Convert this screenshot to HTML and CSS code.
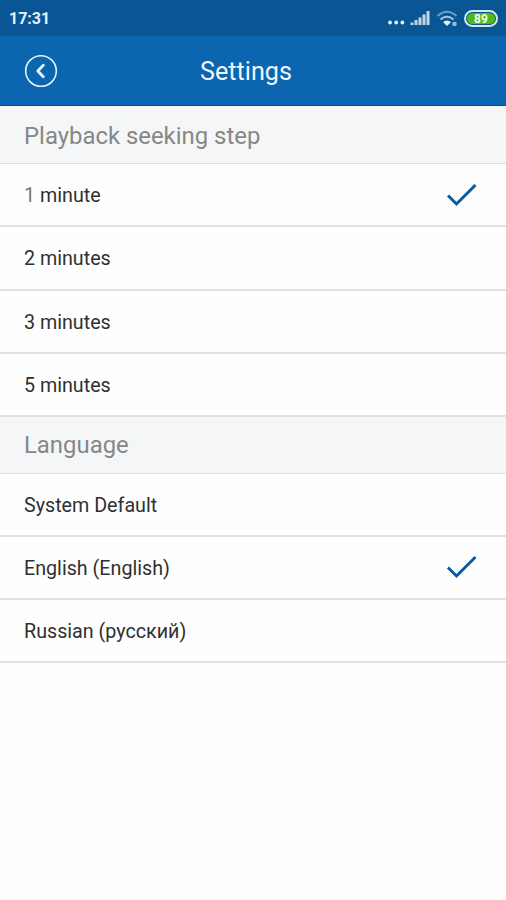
FILE: index.html
```html
<!DOCTYPE html>
<html lang="en">
<head>
<meta charset="utf-8">
<title>Settings</title>
<link rel="stylesheet" href="styles.css">
</head>
<body>
<div class="status">
  <span class="time">17:31</span>
  <svg class="status-icons" width="82" height="20" viewBox="0 0 82 20">
    <g fill="#e3f1f8"><circle cx="5" cy="14.500" r="1.900"/><circle cx="11.200" cy="14.500" r="1.900"/><circle cx="17.400" cy="14.500" r="1.900"/></g>
    <path d="M27 17v-2.500M31 17v-5M35 17V9.500M39 17V6.500M43 17V3" stroke="#bed7e8" stroke-width="3"/>
    <g fill="none" stroke-width="1.900"><path d="M52.500 8q9.500-8.500 19 0" stroke="#6d9fc7"/><path d="M55.500 11.500q6.500-5.500 13 0" stroke="#a9c9df"/></g>
    <path d="M58 14q4-3 8 0l-4 4z" fill="#e3f1f8"/><circle cx="69.500" cy="16" r="2.300" fill="#8fbce0"/>
  </svg>
  <span class="battery"><span class="level">89</span></span>
</div>
<header class="bar">
  <svg class="wave" viewBox="0 0 506 70" width="506" height="70">
    <path d="M0 37h8l3-4 4 8 4-4h2M62 37l4-8 5 16 4-8h8l4-7 5 12 4-5h10l4-9 5 16 4-7h14l5-7 4 11 4-4h15l5-7 4 10 4-3h10M306 37l5-5 5 9 4-4h15l4-6 5 11 4-5h11l4-12 5 20 4-8h10l5-11 4 19 4-8h15l5-12 4 18 5-6h11l4-10 5 17 4-7h15l4-9 5 14 4-5h16"/>
  </svg>
  <svg class="back" width="34" height="34" viewBox="0 0 34 34"><circle cx="17" cy="17" r="15.300" stroke-width="1.600"/><path d="M19.300 11.300L13.800 17l5.500 5.700" stroke-width="2.900"/></svg>
  <h1>Settings</h1>
</header>
<main>
  <h2>Playback seeking step</h2>
  <ul>
    <li><span class="t-min">1 minute</span><svg class="check" width="32" height="24" viewBox="0 0 32 24"><path d="M2 12.500l8.500 8.500L29.500 2"/></svg></li>
    <li>2 minutes</li>
    <li>3 minutes</li>
    <li>5 minutes</li>
  </ul>
  <h2 class="second">Language</h2>
  <ul>
    <li>System Default</li>
    <li>English (English)<svg class="check" width="32" height="24" viewBox="0 0 32 24"><path d="M2 12.500l8.500 8.500L29.500 2"/></svg></li>
    <li>Russian (русский)</li>
  </ul>
</main>
</body>
</html>
```
FILE: styles.css
```css
* { box-sizing: border-box; }
body { margin: 0; background: #fefefe; font-family: Roboto, sans-serif; color: #303030; }
.status { height: 36px; background: #0a5594; display: flex; align-items: center; padding: 0 8px 0 9px; }
.time { flex: 1; color: #e3f1f8; font-size: 16px; font-weight: 700; line-height: 20px; padding-top: 1px; }
.status-icons { margin-right: -3px; }
.battery { width: 34px; height: 17px; border: 2px solid #d5e9e9; border-radius: 9px; padding: 1px; display: flex; }
.level { flex: 1; background: #50b818; border-radius: 6px; color: #f4fff0; font-size: 12px; font-weight: 700; line-height: 12px; text-align: center; }
.bar { position: relative; height: 70px; background: #0b65af; border-bottom: 1px solid #064c98; display: flex; align-items: center; justify-content: center; }
.wave { position: absolute; left: 0; top: 0; fill: none; stroke: #2a75b8; stroke-opacity: .2; stroke-width: 2; }
.back { position: absolute; left: 24px; top: 18px; fill: none; stroke: #e3f3fc; stroke-linecap: round; stroke-linejoin: round; }
h1 { position: relative; margin: 2px 14px 0 0; color: #edf6fd; font-size: 25.200px; font-weight: 400; line-height: 32px; }
h2 { margin: 0; height: 58px; padding: 2px 24px 0; background: #f5f6f8; border-bottom: 1.500px solid #dedfe1; color: #878787; font-size: 23.900px; font-weight: 400; line-height: 56px; }
.second { height: 56.500px; padding-top: 0; line-height: 56px; }
ul { margin: 0; padding: 0; list-style: none; }
li { height: 63.250px; padding: 2px 28px 0 24px; border-bottom: 2px solid #e1e1e1; display: flex; align-items: center; justify-content: space-between; font-size: 19.700px; }
.t-min::first-letter { color: #777; }
.check { margin-top: -2px; fill: none; stroke: #075aa4; stroke-width: 3; }
```
